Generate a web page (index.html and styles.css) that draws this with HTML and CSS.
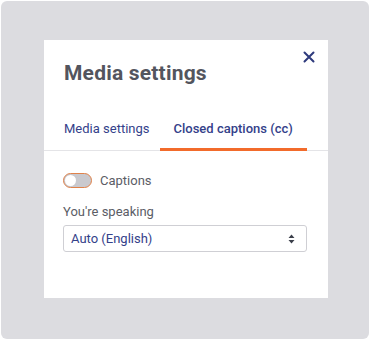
FILE: index.html
```html
<!DOCTYPE html>
<html>
<head>
<meta charset="utf-8">
<link rel="stylesheet" href="styles.css">
</head>
<body>
<div class="frame">
  <div class="card">
    <button class="close" aria-label="Close">
      <svg width="12" height="12" viewBox="0 0 12 12"><path d="M1.5 1.5L10.5 10.5M10.5 1.5L1.5 10.5" stroke="#2e3a7c" stroke-width="2" stroke-linecap="round"/></svg>
    </button>
    <h1 class="title">Media settings</h1>
    <div class="tabs">
      <div class="tab">Media settings</div>
      <div class="tab active">Closed captions (cc)</div>
    </div>
    <div class="body">
      <label class="toggle-row">
        <span class="toggle"><span class="knob"></span></span>
        <span class="toggle-label">Captions</span>
      </label>
      <div class="field-label">You're speaking</div>
      <div class="select">
        <span class="select-text">Auto (English)</span>
        <svg class="arrows" width="7" height="10" viewBox="0 0 7 10"><path d="M3.5 0.5L6.5 4H0.5Z M3.5 9.5L6.5 6H0.5Z" fill="#3b3f4a"/></svg>
      </div>
    </div>
  </div>
</div>
</body>
</html>
```

FILE: styles.css
```css
html, body {
  margin: 0;
  padding: 0;
  background: #ffffff;
}
body {
  font-family: "Roboto", "Inter", sans-serif;
}
.frame {
  margin: 1px;
  width: 368px;
  height: 338px;
  box-sizing: border-box;
  background: #dcdce0;
  border-radius: 6px;
  padding: 39px 41px 0 43px;
}
.card {
  position: relative;
  background: #ffffff;
  width: 284px;
  height: 258px;
  box-sizing: border-box;
  padding-top: 20px;
}
.close {
  position: absolute;
  top: 10px;
  right: 12px;
  width: 14px;
  height: 14px;
  padding: 0;
  border: 0;
  background: none;
  display: flex;
  align-items: center;
  justify-content: center;
}
.title {
  margin: 0 0 0 20px;
  font-size: 21px;
  font-weight: 700;
  color: #53555e;
  line-height: 26px;
  letter-spacing: 0.2px;
}
.tabs {
  margin-top: 26px;
  display: flex;
  padding-left: 20px;
  border-bottom: 1px solid #e4e4e7;
  gap: 10px;
}
.tab {
  font-size: 13px;
  color: #34418a;
  line-height: 18px;
  padding: 8px 0 10px;
  border-bottom: 3px solid transparent;
  margin-bottom: -1px;
}
.tab.active {
  font-weight: 500;
  border-bottom-color: #f26b2b;
  padding-left: 14px;
  padding-right: 14px;
}
.body {
  padding: 22px 21px 0 19px;
}
.toggle-row {
  display: flex;
  align-items: center;
  gap: 8px;
}
.toggle {
  box-sizing: border-box;
  width: 29px;
  height: 15px;
  border: 1.5px solid #e0824a;
  border-radius: 9px;
  background: #c9c9ce;
  display: flex;
  align-items: center;
  padding: 0 1px;
}
.knob {
  width: 11px;
  height: 11px;
  border-radius: 50%;
  background: #ffffff;
}
.toggle-label {
  font-size: 13px;
  color: #5b5d66;
  line-height: 14px;
}
.field-label {
  margin-top: 15px;
  font-size: 13px;
  color: #5b5d66;
  line-height: 18px;
}
.select {
  margin-top: 4px;
  height: 27px;
  box-sizing: border-box;
  border: 1px solid #cfcfd4;
  border-radius: 3px;
  display: flex;
  align-items: center;
  justify-content: space-between;
  padding: 0 11px 0 7px;
}
.select-text {
  font-size: 13px;
  color: #34418a;
}
```
